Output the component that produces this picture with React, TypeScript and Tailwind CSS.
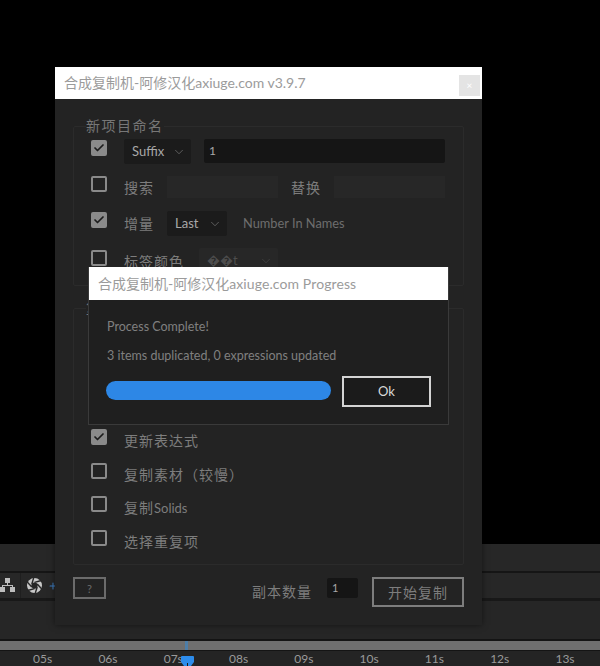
import React from 'react';
import { Check, ChevronDown, Plus } from 'lucide-react';

const font = "font-['Lato','Noto_Sans_CJK_SC',sans-serif]";

const ticks = ['05s', '06s', '07s', '08s', '09s', '10s', '11s', '12s', '13s'];

const Box: React.FC<{ checked?: boolean }> = ({ checked }) => (
  <span
    className={`flex h-[16px] w-[16px] shrink-0 items-center justify-center rounded-[2px] border-2 border-[#8a8a8a] ${
      checked ? 'bg-[#8a8a8a]' : 'bg-transparent'
    }`}
  >
    {checked && <Check size={12} strokeWidth={3.5} className="text-[#1c1c1c]" />}
  </span>
);

const Label: React.FC<{ children: React.ReactNode; className?: string }> = ({ children, className }) => (
  <span className={`mt-[2px] shrink-0 whitespace-nowrap text-[14px] leading-[20px] tracking-[1px] text-[#7d7d7d] ${className ?? ''}`}>
    {children}
  </span>
);

const Row: React.FC<{ checked?: boolean; children: React.ReactNode }> = ({ checked, children }) => (
  <div className="flex h-[33.5px] items-start gap-[17px]">
    <Box checked={checked} />
    <Label>{children}</Label>
  </div>
);

const Hierarchy = () => (
  <svg width="15" height="15" viewBox="0 0 15 15" className="fill-[#bdbdbd]">
    <rect x="5" y="0" width="5" height="5" />
    <rect x="0" y="9" width="5" height="5" />
    <rect x="10" y="9" width="5" height="5" />
    <path d="M7 5h1v2h5v2h-1V8H3v1H2V7h5z" />
  </svg>
);

const Shutter = () => (
  <svg width="15" height="15" viewBox="0 0 24 24" className="ml-[6px]">
    <circle cx="12" cy="12" r="12" fill="#c8c8c8" />
    <circle cx="12" cy="12" r="5" fill="#272727" />
    <g stroke="#272727" strokeWidth="2.2">
      <path d="M12 7L23 4" />
      <path d="M16.3 9.5L24 18" />
      <path d="M16.3 14.5L13 25" />
      <path d="M12 17L1 20" />
      <path d="M7.7 14.5L0 6" />
      <path d="M7.7 9.5L11 -1" />
    </g>
  </svg>
);

const Dropdown: React.FC<{ label: string; w: string; dim?: boolean }> = ({ label, w, dim }) => (
  <div
    className={`flex h-[25px] items-center justify-between rounded-[2px] pl-[8px] pr-[5px] text-[13px] ${w} ${
      dim ? 'bg-[#272727] text-[#4d4d4d]' : 'bg-[#1b1b1b] text-[#a8a8a8]'
    }`}
  >
    <span>{label}</span>
    <ChevronDown size={14} strokeWidth={1} className={dim ? 'text-[#4d4d4d]' : 'text-[#8a8a8a]'} />
  </div>
);

export default function App() {
  return (
    <div className={`relative h-[666px] w-[600px] overflow-hidden bg-black ${font}`}>
      {/* timeline behind the dialogs */}
      <div className="flex h-full flex-col">
        <div className="h-[544px] shrink-0 bg-black" />
        <div className="h-[27px] shrink-0 bg-[#272727]" />
        <div className="h-[2px] shrink-0 bg-[#151515]" />
        <div className="flex h-[25px] shrink-0 items-center bg-[#272727]">
          <Hierarchy />
          <div className="ml-[5px] h-[25px] w-[1px] bg-[#1f1f1f]" />
          <Shutter />
          <Plus size={10} strokeWidth={2.5} className="ml-[6px] text-[#3f7fc4]" />
        </div>
        <div className="h-[3px] shrink-0 bg-[#181818]" />
        <div className="h-[38px] shrink-0 bg-[#262626]" />
        <div className="h-[2px] shrink-0 bg-[#141414]" />
        <div className="relative h-[9px] shrink-0 bg-[#6f6f6f]">
          <div className="absolute left-[185px] top-0 h-full w-[3px] bg-[#4d7ea8]" />
        </div>
        <div className="h-[1px] shrink-0 bg-[#141414]" />
        <div className="relative flex flex-1 bg-[#242424] pl-[10px] pt-[1px]">
          {ticks.map((t) => (
            <span key={t} className="w-[65.3px] shrink-0 text-center text-[12px] leading-[14px] text-[#9a9a9a]">
              {t}
            </span>
          ))}
          <svg width="13" height="10" viewBox="0 0 13 10" className="absolute left-[181px] top-[5px]">
            <path d="M1 0h11a1 1 0 0 1 1 1v5l-3 4H3L0 6V1a1 1 0 0 1 1-1z" fill="#2d8ceb" />
            <rect x="6" y="7" width="1" height="3" fill="#1a1a1a" />
          </svg>
        </div>
      </div>

      {/* main dialog */}
      <div className="absolute left-[55px] top-[67px] flex h-[558px] w-[427px] flex-col bg-[#232323] shadow-[0_0_6px_rgba(0,0,0,0.5)]">
        <div className="flex h-[32px] shrink-0 items-center justify-between bg-white pl-[9px] pr-[2px]">
          <span className="-mt-[1px] text-[14px] text-[#9b9b9b]">合成复制机-阿修汉化axiuge.com v3.9.7</span>
          <span className="mt-[5px] flex h-[21px] w-[21px] items-center justify-center bg-[#e4e4e4] text-[10px] text-white">×</span>
        </div>

        <div className="flex flex-1 flex-col px-[18px] pt-[19px]">
          <fieldset className="h-[168px] shrink-0 rounded-[2px] border border-[#2b2b2b] pl-[17px] pr-[18px] pt-[6px]">
            <legend className="-ml-[5px] text-[14px] leading-[16px] tracking-[1.5px] text-[#777]">新项目命名</legend>
            <div className="flex h-[36px] items-start">
              <Box checked />
              <div className="-mt-[1px] ml-[17px]">
                <Dropdown label="Suffix" w="w-[67px]" />
              </div>
              <div className="-mt-[1px] ml-[13px] flex h-[24px] w-[241px] items-center rounded-[2px] bg-[#151515] pl-[5px] text-[12px] text-[#a8a8a8]">
                1
              </div>
            </div>
            <div className="flex h-[36px] items-start">
              <Box />
              <Label className="ml-[17px]">搜索</Label>
              <div className="ml-[13px] h-[22px] w-[111px] bg-[#272727]" />
              <Label className="ml-[13px]">替换</Label>
              <div className="ml-[13px] h-[22px] w-[111px] bg-[#272727]" />
            </div>
            <div className="flex h-[38px] items-start">
              <Box checked />
              <Label className="ml-[17px]">增量</Label>
              <div className="-mt-[1px] ml-[13px]">
                <Dropdown label="Last" w="w-[60px]" />
              </div>
              <span className="ml-[16px] mt-[1px] text-[12.8px] leading-[20px] text-[#6e6e6e]">Number In Names</span>
            </div>
            <div className="flex items-start">
              <Box />
              <Label className="ml-[17px]">标签颜色</Label>
              <div className="-mt-[2px] ml-[15px]">
                <Dropdown label="��t" w="w-[79px]" dim />
              </div>
            </div>
          </fieldset>

          <fieldset className="mt-[14px] h-[265px] shrink-0 rounded-[2px] border border-[#2b2b2b] pl-[17px]">
            <legend className="-ml-[5px] text-[14px] leading-[16px] tracking-[1.5px] text-[#777]">复制选项</legend>
            <div className="pt-[113px]">
              <Row checked>更新表达式</Row>
              <Row>复制素材（较慢）</Row>
              <Row>
                复制<span className="text-[13px] tracking-normal">Solids</span>
              </Row>
              <div className="flex items-start gap-[17px]">
                <Box />
                <Label>选择重复项</Label>
              </div>
            </div>
          </fieldset>

          <div className="mt-[12px] flex items-start">
            <button className="h-[22px] w-[33px] border-2 border-[#6b6b6b] text-[11px] leading-none text-[#6b6b6b]">?</button>
            <Label className="ml-auto mt-[5px]">副本数量</Label>
            <div className="ml-[15px] mt-[1px] flex h-[20px] w-[31px] items-center rounded-[2px] bg-[#151515] pl-[5px] text-[11px] text-[#a8a8a8]">
              1
            </div>
            <button className="ml-[14px] h-[30px] w-[92px] border-2 border-[#7d7d7d] text-[14px] tracking-[1px] text-[#7d7d7d]">开始复制</button>
          </div>
        </div>
      </div>

      {/* progress dialog */}
      <div className="absolute left-[88px] top-[267px] flex h-[158px] w-[361px] flex-col border border-t-0 border-[#3a3a3a] bg-[#1f1f1f]">
        <div className="flex h-[33px] shrink-0 items-center bg-white pl-[9px] text-[14px] text-[#9b9b9b]">
          <span>合成复制机-阿修汉化<span className="tracking-[0.1px]">axiuge.com Progress</span></span>
        </div>
        <div className="flex flex-1 flex-col pl-[17px] pt-[17px]">
          <p className="pl-[1px] text-[12.5px] leading-[20px] text-[#808080]">Process Complete!</p>
          <p className="mt-[9px] pl-[1px] text-[12.5px] leading-[20px] text-[#808080]">3 items duplicated, 0 expressions updated</p>
          <div className="mt-[10px] flex items-start">
            <div className="mt-[5px] h-[19px] w-[225px] rounded-full bg-[#2d87e6]" />
            <button className="ml-[11px] h-[31px] w-[89px] border-2 border-[#d4d4d4] bg-[#1b1b1b] text-[13px] text-[#d8d8d8]">Ok</button>
          </div>
        </div>
      </div>
    </div>
  );
}
